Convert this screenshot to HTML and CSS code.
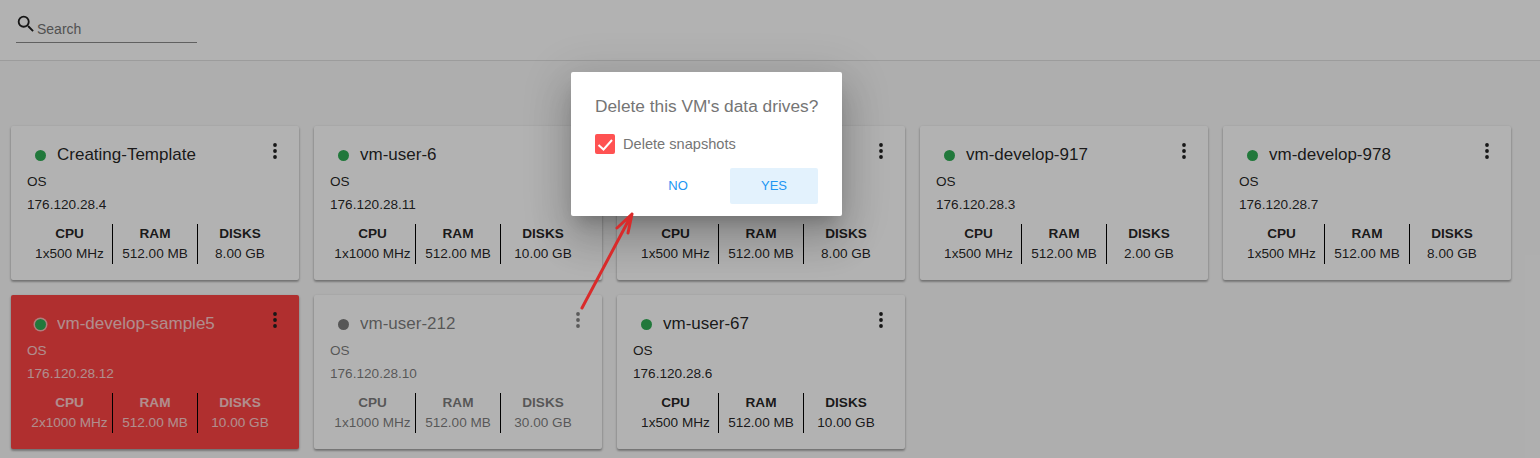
FILE: index.html
```html
<!DOCTYPE html>
<html lang="en">
<head>
<meta charset="utf-8">
<title>VMs</title>
<link rel="stylesheet" href="styles.css">
</head>
<body>
<header class="topbar">
  <label class="search">
    <svg class="search-icon" viewBox="0 0 24 24" width="22" height="22"><path d="M15.5 14h-.79l-.28-.27A6.47 6.47 0 0 0 16 9.5 6.5 6.5 0 1 0 9.5 16c1.61 0 3.09-.59 4.23-1.57l.27.28v.79l5 4.99L20.49 19l-4.99-5zm-6 0C7.01 14 5 11.99 5 9.5S7.01 5 9.5 5 14 7.01 14 9.5 11.99 14 9.5 14z"/></svg>
    <span class="search-text">Search</span>
  </label>
</header>
<main class="grid">
  <article class="card"><div class="card-head"><span class="dot"></span><h2 class="name">Creating-Template</h2><svg class="menu" viewBox="0 0 4 16" width="4" height="16"><circle cx="2" cy="2" r="1.9"/><circle cx="2" cy="8" r="1.9"/><circle cx="2" cy="14" r="1.9"/></svg></div><p class="line">OS</p><p class="line">176.120.28.4</p><div class="stats"><div class="stat"><b>CPU</b><span>1x500 MHz</span></div><div class="stat"><b>RAM</b><span>512.00 MB</span></div><div class="stat"><b>DISKS</b><span>8.00 GB</span></div></div></article>
  <article class="card"><div class="card-head"><span class="dot"></span><h2 class="name">vm-user-6</h2><svg class="menu" viewBox="0 0 4 16" width="4" height="16"><circle cx="2" cy="2" r="1.9"/><circle cx="2" cy="8" r="1.9"/><circle cx="2" cy="14" r="1.9"/></svg></div><p class="line">OS</p><p class="line">176.120.28.11</p><div class="stats"><div class="stat"><b>CPU</b><span>1x1000 MHz</span></div><div class="stat"><b>RAM</b><span>512.00 MB</span></div><div class="stat"><b>DISKS</b><span>10.00 GB</span></div></div></article>
  <article class="card"><div class="card-head"><span class="dot"></span><h2 class="name"></h2><svg class="menu" viewBox="0 0 4 16" width="4" height="16"><circle cx="2" cy="2" r="1.9"/><circle cx="2" cy="8" r="1.9"/><circle cx="2" cy="14" r="1.9"/></svg></div><p class="line"></p><p class="line"></p><div class="stats"><div class="stat"><b>CPU</b><span>1x500 MHz</span></div><div class="stat"><b>RAM</b><span>512.00 MB</span></div><div class="stat"><b>DISKS</b><span>8.00 GB</span></div></div></article>
  <article class="card"><div class="card-head"><span class="dot"></span><h2 class="name">vm-develop-917</h2><svg class="menu" viewBox="0 0 4 16" width="4" height="16"><circle cx="2" cy="2" r="1.9"/><circle cx="2" cy="8" r="1.9"/><circle cx="2" cy="14" r="1.9"/></svg></div><p class="line">OS</p><p class="line">176.120.28.3</p><div class="stats"><div class="stat"><b>CPU</b><span>1x500 MHz</span></div><div class="stat"><b>RAM</b><span>512.00 MB</span></div><div class="stat"><b>DISKS</b><span>2.00 GB</span></div></div></article>
  <article class="card"><div class="card-head"><span class="dot"></span><h2 class="name">vm-develop-978</h2><svg class="menu" viewBox="0 0 4 16" width="4" height="16"><circle cx="2" cy="2" r="1.9"/><circle cx="2" cy="8" r="1.9"/><circle cx="2" cy="14" r="1.9"/></svg></div><p class="line">OS</p><p class="line">176.120.28.7</p><div class="stats"><div class="stat"><b>CPU</b><span>1x500 MHz</span></div><div class="stat"><b>RAM</b><span>512.00 MB</span></div><div class="stat"><b>DISKS</b><span>8.00 GB</span></div></div></article>
  <article class="card card-selected"><div class="card-head"><span class="dot dot-ring"></span><h2 class="name">vm-develop-sample5</h2><svg class="menu" viewBox="0 0 4 16" width="4" height="16"><circle cx="2" cy="2" r="1.9"/><circle cx="2" cy="8" r="1.9"/><circle cx="2" cy="14" r="1.9"/></svg></div><p class="line">OS</p><p class="line">176.120.28.12</p><div class="stats"><div class="stat"><b>CPU</b><span>2x1000 MHz</span></div><div class="stat"><b>RAM</b><span>512.00 MB</span></div><div class="stat"><b>DISKS</b><span>10.00 GB</span></div></div></article>
  <article class="card card-off"><div class="card-head"><span class="dot dot-off"></span><h2 class="name">vm-user-212</h2><svg class="menu" viewBox="0 0 4 16" width="4" height="16"><circle cx="2" cy="2" r="1.9"/><circle cx="2" cy="8" r="1.9"/><circle cx="2" cy="14" r="1.9"/></svg></div><p class="line">OS</p><p class="line">176.120.28.10</p><div class="stats"><div class="stat"><b>CPU</b><span>1x1000 MHz</span></div><div class="stat"><b>RAM</b><span>512.00 MB</span></div><div class="stat"><b>DISKS</b><span>30.00 GB</span></div></div></article>
  <article class="card"><div class="card-head"><span class="dot"></span><h2 class="name">vm-user-67</h2><svg class="menu" viewBox="0 0 4 16" width="4" height="16"><circle cx="2" cy="2" r="1.9"/><circle cx="2" cy="8" r="1.9"/><circle cx="2" cy="14" r="1.9"/></svg></div><p class="line">OS</p><p class="line">176.120.28.6</p><div class="stats"><div class="stat"><b>CPU</b><span>1x500 MHz</span></div><div class="stat"><b>RAM</b><span>512.00 MB</span></div><div class="stat"><b>DISKS</b><span>10.00 GB</span></div></div></article>
</main>
<div class="overlay"></div>
<section class="dialog">
  <h1 class="dialog-title">Delete this VM's data drives?</h1>
  <div class="check-row">
    <span class="checkbox"><svg viewBox="0 0 20 20" width="20" height="20"><path d="M3.500 11l5 4.500 8.500-9.500" fill="none" stroke="#fff" stroke-width="2"/></svg></span>
    <span class="check-label">Delete snapshots</span>
  </div>
  <div class="actions">
    <button class="btn">NO</button>
    <button class="btn btn-active">YES</button>
  </div>
</section>
<svg class="arrow" width="70" height="110" viewBox="0 0 70 110"><path d="M12 105 62 11M62 11 47 25M62 11 58 30" fill="none" stroke="#d92b2b" stroke-width="3" stroke-linecap="round"/></svg>
</body>
</html>
```
FILE: styles.css
```css
* { box-sizing: border-box; }
html, body { margin: 0; height: 100%; }
body {
  width: 1540px;
  height: 458px;
  overflow: hidden;
  background: #fafafa;
  font-family: "Liberation Sans", Arial, sans-serif;
  color: rgba(0, 0, 0, .87);
  position: relative;
}
.topbar {
  height: 61px;
  padding: 12px 16px 0;
  background: #fff;
  border-bottom: 1px solid #e0e0e0;
}
.search {
  display: flex;
  align-items: flex-start;
  width: 181px;
  height: 31px;
  border-bottom: 1px solid #8a8a8a;
}
.search-icon { margin: 1px 0 0 -1px; flex: none; fill: #212121; }
.search-text { font-size: 14px; line-height: 20px; margin-top: 7px; color: #757575; }
.grid {
  display: flex;
  flex-wrap: wrap;
  gap: 15px;
  padding: 65px 11px 0;
}
.card {
  width: 288px;
  height: 154px;
  padding: 17px 16px 0;
  background: #fff;
  border-radius: 2px;
  box-shadow: 0 1px 3px rgba(0, 0, 0, .25), 0 2px 2px rgba(0, 0, 0, .2);
  font-size: 13.6px;
}
.card-head { display: flex; align-items: center; height: 24px; padding-left: 8px; position: relative; }
.dot { flex: none; width: 11px; height: 11px; border-radius: 50%; background: #30ad55; margin-right: 11px; }
.dot-ring { box-shadow: 0 0 0 1.5px rgba(255, 255, 255, .6); }
.dot-off { background: #7c7c7c; }
.name { margin: 0; font-size: 17px; font-weight: 400; line-height: 24px; min-width: 1px; }
.menu { position: absolute; right: 6px; top: 0; fill: #212121; }
.line { margin: 0; height: 23px; line-height: 23px; }
.line:first-of-type { margin-top: 3px; }
.stats { display: flex; margin-top: 8px; height: 40px; }
.stat {
  width: 85px;
  display: flex;
  flex-direction: column;
  align-items: center;
  text-align: center;
  line-height: 20px;
  border-left: 1px solid #000;
  white-space: nowrap;
}
.stat:first-child { border-left: 0; }
.card-selected { background: #fc4444; }
.card-selected .name,
.card-selected .line,
.card-selected .stat > * { color: #fff; opacity: .72; }
.card-off .name,
.card-off .line,
.card-off .stat > * { opacity: .6; }
.card-off .menu { fill: #828282; }
.overlay { position: absolute; inset: 0; background: rgba(0, 0, 0, .3); }
.dialog {
  position: absolute;
  left: 571px;
  top: 72px;
  width: 271px;
  height: 144px;
  padding: 23px 24px 0;
  background: #fff;
  border-radius: 2px;
  box-shadow: 0 11px 15px -7px rgba(0,0,0,.2), 0 24px 38px 3px rgba(0,0,0,.14), 0 9px 46px 8px rgba(0,0,0,.12);
}
.dialog-title { margin: 0; font-size: 17.3px; font-weight: 400; line-height: 22px; color: #757575; white-space: nowrap; }
.check-row { display: flex; align-items: center; height: 20px; margin-top: 17px; }
.checkbox { width: 20px; height: 20px; border-radius: 2px; background: #ff5252; margin-right: 8px; }
.checkbox svg { display: block; }
.check-label { font-size: 14.6px; line-height: 18px; color: #757575; }
.actions { display: flex; justify-content: flex-end; gap: 8px; margin-top: 14px; }
.btn {
  width: 88px;
  height: 36px;
  border: 0;
  padding: 0 0 2px;
  border-radius: 2px;
  background: transparent;
  color: #2196f3;
  font: 13px "Liberation Sans", Arial, sans-serif;
}
.btn-active { background: #e3f2fd; }
.arrow { position: absolute; left: 570px; top: 203px; }
```
